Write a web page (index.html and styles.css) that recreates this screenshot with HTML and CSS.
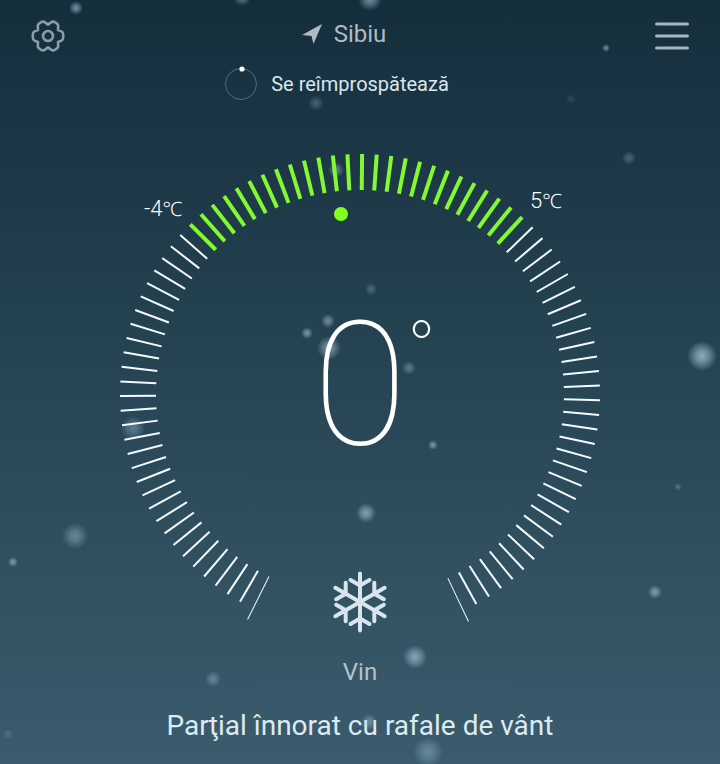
FILE: index.html
```
<!DOCTYPE html>
<html lang="ro">
<head>
    <meta charset="utf-8">
    <meta name="viewport" content="width=device-width, initial-scale=1">
    <title>Vremea - Sibiu</title>
    <link rel="stylesheet" href="styles.css">
</head>
<body>
    <svg class="snow" id="snow" aria-hidden="true">
        <defs>
            <radialGradient id="flake">
                <stop offset="0" stop-color="#a9cfe2"/>
                <stop offset="0.4" stop-color="#a9cfe2" stop-opacity="0.7"/>
                <stop offset="1" stop-color="#a9cfe2" stop-opacity="0"/>
            </radialGradient>
        </defs>
    </svg>

    <header class="topbar">
        <button class="icon-btn" aria-label="Setări">
            <svg width="34" height="34" viewBox="-17 -17 34 34" fill="none" stroke="currentColor" stroke-width="2.6" stroke-linejoin="round">
                <path d="M0 -11.4 L3 -13.6 Q5 -15.2 7 -13.8 L9 -12.4 Q10.2 -11.6 10.2 -10 L10 -6 L13.4 -4.6 Q15.2 -3.6 15.2 -1.4 V1.4 Q15.2 3.6 13.4 4.6 L10 6 L10.2 10 Q10.2 11.6 9 12.4 L7 13.8 Q5 15.2 3 13.6 L0 11.4 L-3 13.6 Q-5 15.2 -7 13.8 L-9 12.4 Q-10.2 11.6 -10.2 10 L-10 6 L-13.4 4.6 Q-15.2 3.6 -15.2 1.4 V-1.4 Q-15.2 -3.6 -13.4 -4.6 L-10 -6 L-10.2 -10 Q-10.2 -11.6 -9 -12.4 L-7 -13.8 Q-5 -15.2 -3 -13.6 Z"/>
                <circle r="5"/>
            </svg>
        </button>
        <h1 class="city">
            <svg width="20" height="20" viewBox="0 0 20 20" fill="currentColor">
                <path d="M20 0 L11.5 20 L9.5 12 L0 11 Z"/>
            </svg>
            Sibiu
        </h1>
        <button class="icon-btn" aria-label="Meniu">
            <svg width="34" height="28" viewBox="0 0 34 28" stroke="currentColor" stroke-width="3" stroke-linecap="round">
                <path d="M1.5 2 H32.5 M1.5 14 H32.5 M1.5 26 H32.5"/>
            </svg>
        </button>
    </header>

    <div class="refresh">
        <svg width="32" height="36" viewBox="0 0 32 36">
            <circle cx="16" cy="18" r="15.5" fill="none" stroke="#7c929d" stroke-width="0.6"/>
            <circle cx="17" cy="3" r="2.6" fill="#fff"/>
        </svg>
        <span>Se reîmprospătează</span>
    </div>

    <main>
        <div class="dial">
            <svg class="ticks" id="ticks" viewBox="-240 -240 480 480" aria-hidden="true">
                <circle cx="-19" cy="-180" r="7" fill="#83ff1e"/>
            </svg>
            <span class="limit low">-4<span class="unit">℃</span></span>
            <span class="limit high">5<span class="unit">℃</span></span>
            <div class="temp">0<span class="degree">°</span></div>
            <svg class="condition" width="56" height="62" viewBox="-28 -31 56 62" fill="none" stroke="#d8e5ee" stroke-width="4" stroke-linecap="round" stroke-linejoin="round">
                <defs>
                    <path id="arm" d="M0 0 V-28.5 M-9.5 -22 L0 -16.5 L9.5 -22"/>
                </defs>
                <use href="#arm"/>
                <use href="#arm" transform="rotate(60)"/>
                <use href="#arm" transform="rotate(120)"/>
                <use href="#arm" transform="rotate(180)"/>
                <use href="#arm" transform="rotate(240)"/>
                <use href="#arm" transform="rotate(300)"/>
            </svg>
        </div>
        <p class="day">Vin</p>
        <p class="summary">Parţial înnorat cu rafale de vânt</p>
    </main>

    <script>
        const NS = 'http://www.w3.org/2000/svg';

        function add(parent, tag, attrs) {
            const el = document.createElementNS(NS, tag);
            for (const key in attrs) {
                el.setAttribute(key, attrs[key]);
            }
            parent.appendChild(el);
        }

        // 89 ticks, 3.5 degrees apart; 31..56 is today's range
        const ticks = document.getElementById('ticks');
        for (let i = 0; i < 89; i++) {
            let type = 'tick';
            if (i >= 31 && i <= 56) type = 'tick active';
            if (i === 0 || i === 88) type = 'tick end';
            add(ticks, 'line', {
                class: type,
                y1: -204,
                y2: i === 0 || i === 88 ? -252 : -240,
                transform: `rotate(${-153.5 + i * 3.5})`
            });
        }

        // x, y, radius, opacity
        const flakes = [
            [76, 8, 7, 0.6], [242, -3, 9, 0.5], [370, -1, 12, 0.6], [606, 48, 4, 0.6],
            [316, 103, 8, 0.3], [571, 99, 5, 0.15], [629, 158, 7, 0.3], [336, 170, 8, 0.5],
            [371, 289, 6, 0.3], [328, 321, 7, 0.55], [307, 333, 6, 0.6], [329, 348, 12, 0.6],
            [409, 368, 7, 0.4], [702, 356, 15, 0.75], [433, 445, 5, 0.6], [133, 428, 12, 0.4],
            [366, 513, 10, 0.65], [75, 536, 13, 0.45], [13, 562, 5, 0.6], [678, 487, 4, 0.3],
            [655, 592, 7, 0.6], [415, 657, 12, 0.65], [213, 679, 8, 0.4], [8, 734, 5, 0.2],
            [369, 722, 8, 0.45], [428, 752, 15, 0.4]
        ];
        const snow = document.getElementById('snow');
        flakes.forEach(([x, y, r, o]) => {
            add(snow, 'circle', { cx: x, cy: y, r: r, opacity: o, fill: 'url(#flake)' });
        });
    </script>
</body>
</html>
```
FILE: styles.css
```
* {
    box-sizing: border-box;
}

body {
    position: relative;
    margin: 0;
    min-height: 100vh;
    font-family: Roboto, "Noto Sans", sans-serif;
    color: #fff;
    background: linear-gradient(#142e3c, #284655 52%, #3b5c6d);
}

.snow {
    position: absolute;
    inset: 0;
    width: 100%;
    height: 100%;
    pointer-events: none;
}

.topbar {
    display: flex;
    align-items: center;
    justify-content: space-between;
    height: 68px;
    padding: 4px 31px 0;
}

.icon-btn {
    display: flex;
    padding: 0;
    border: none;
    background: none;
    color: #a5b8c2;
    cursor: pointer;
}

.icon-btn:first-child {
    color: #879eab;
}

.city {
    display: flex;
    align-items: center;
    gap: 12px;
    margin: 0;
    padding: 0 32px 4px 0;
    font-size: 24px;
    font-weight: 400;
    line-height: 28px;
    color: #b0bcc2;
}

.refresh {
    display: flex;
    align-items: center;
    justify-content: center;
    gap: 14px;
    height: 32px;
    padding-right: 46px;
    font-size: 20px;
    line-height: 24px;
    color: #dbe6ec;
}

.dial {
    position: relative;
    display: grid;
    width: 100%;
    max-width: 480px;
    margin: 54px auto 0;
}

.ticks {
    display: block;
    width: 100%;
    overflow: visible;
}

.tick {
    stroke: #f4fbff;
    stroke-width: 2;
}

.tick.active {
    stroke: #83f932;
    stroke-width: 4;
}

.tick.end {
    stroke-width: 1;
}

.limit {
    position: absolute;
    font-size: 22px;
    font-weight: 300;
    line-height: 26px;
}

.unit {
    font-size: 20px;
}

.low {
    top: 42px;
    left: 24px;
}

.high {
    top: 34px;
    right: 38px;
}

.temp {
    position: absolute;
    top: 131px;
    left: 50%;
    transform: translateX(-50%);
    font-size: 172px;
    font-weight: 100;
    line-height: 200px;
}

.degree {
    position: absolute;
    top: 26px;
    left: 100%;
    font-size: 76px;
    font-weight: 100;
    line-height: 76px;
}

.condition {
    position: absolute;
    bottom: 1px;
    left: 50%;
    transform: translateX(-50%);
}

.day,
.summary {
    margin: 0;
    text-align: center;
}

.day {
    margin-top: 22px;
    font-size: 24px;
    line-height: 32px;
    color: #b4c4cd;
}

.summary {
    margin-top: 20px;
    padding-bottom: 20px;
    font-size: 28px;
    line-height: 36px;
    color: #dceaf1;
}
```
